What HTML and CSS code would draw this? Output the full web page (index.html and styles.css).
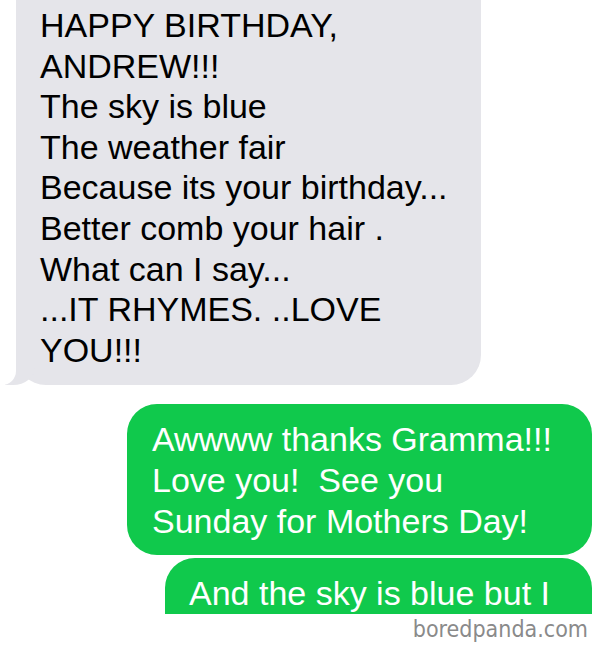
FILE: index.html
```html
<!DOCTYPE html>
<html lang="en">
<head>
    <meta charset="UTF-8">
    <meta name="viewport" content="width=device-width, initial-scale=1.0">
    <title>Happy Birthday Andrew</title>
    <link rel="stylesheet" href="styles.css">
</head>
<body>
    <div class="screen">
        <div class="bubble them">
            HAPPY BIRTHDAY,<br>
            ANDREW!!!<br>
            The sky is blue<br>
            The weather fair<br>
            Because its your birthday...<br>
            Better comb your hair .<br>
            What can I say...<br>
            ...IT RHYMES. ..LOVE<br>
            YOU!!!
        </div>

        <div class="bubble me">
            Awwww thanks Gramma!!!<br>
            Love you!&nbsp; See you<br>
            Sunday for Mothers Day!
        </div>

        <div class="bubble me cut">
            And the sky is blue but I
        </div>
    </div>

    <footer class="credit">boredpanda.com</footer>
</body>
</html>
```

FILE: styles.css
```css
body {
    margin: 0; padding: 0; background: #fff;
    font-family: "Liberation Sans", Arial, sans-serif;
}
.screen {
    height: 614px; overflow: hidden; padding: 0 13px 0 16px;
    display: flex; flex-direction: column; align-items: flex-start;
}

/* Message bubbles */
.bubble {
    box-sizing: border-box; position: relative;
    font-size: 34px; line-height: 40.6px;
    padding: 5px 20px 15px 24px; border-radius: 30px;
}
.them {
    width: 465px; background: #e5e5ea; color: #000;
    border-top-left-radius: 0; border-top-right-radius: 0;
    margin-bottom: 19px;
}
/* tail */
.them::before, .them::after {
    content: ""; position: absolute; bottom: 0; height: 30px;
}
.them::before {
    left: -11px; width: 30px; background: #e5e5ea;
    border-bottom-right-radius: 22px 18px;
}
.them::after {
    left: -30px; width: 30px; background: #fff;
    border-bottom-right-radius: 14px;
}
.me {
    align-self: flex-end; width: 465px;
    background: #10c94c; color: #fff;
    padding: 15px 20px 14px 25px;
}
.me + .me { margin-top: 3px; }
.cut { width: 427px; padding-left: 24px; padding-bottom: 60px; }

/* Watermark */
.credit {
    height: 40px; box-sizing: border-box; padding: 2px 17px 0 0; text-align: right;
    font-family: "DejaVu Sans Condensed", "DejaVu Sans", sans-serif;
    font-size: 23px; line-height: 27px; color: #8a8a8a;
}
```
